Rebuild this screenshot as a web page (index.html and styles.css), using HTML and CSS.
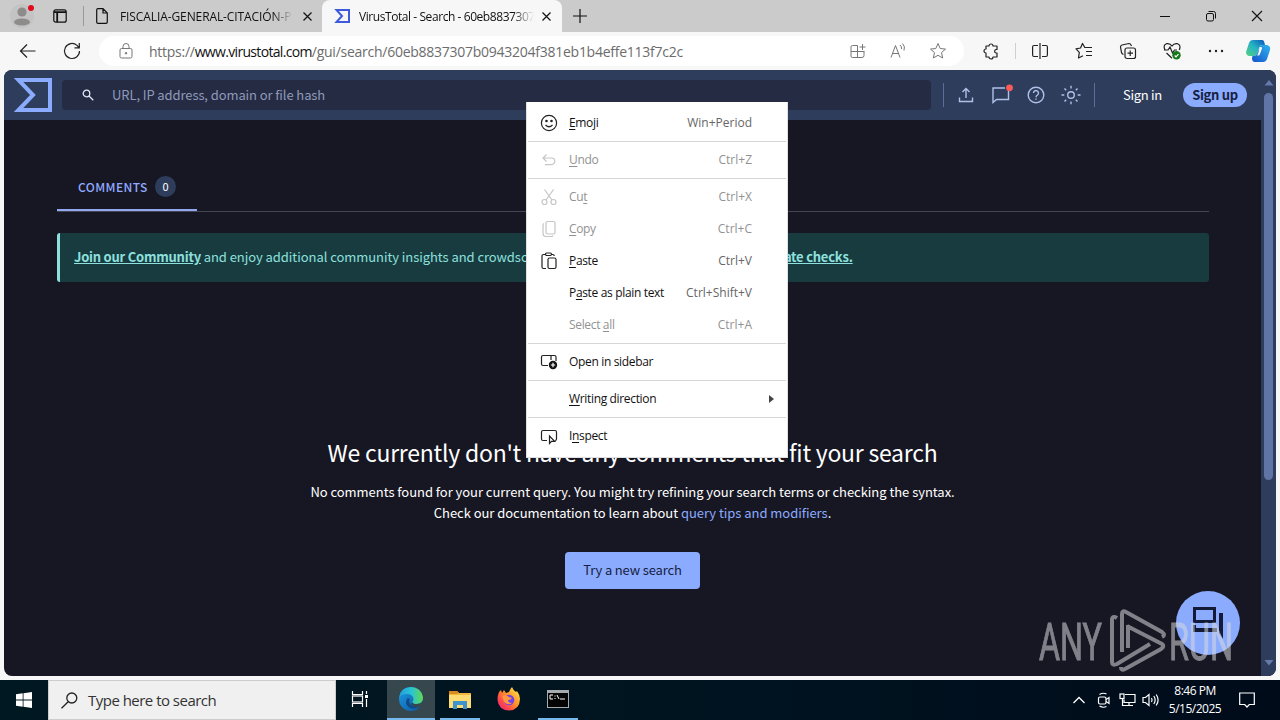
FILE: index.html
```
<!DOCTYPE html>
<html lang="en">
<head>
    <meta charset="UTF-8">
    <meta name="viewport" content="width=device-width, initial-scale=1.0">
    <title>VirusTotal - Search</title>
    <link rel="stylesheet" href="styles.css">
</head>
<body>
    <!-- Tab strip -->
    <div class="tab-strip">
        <svg class="profile" width="26" height="26" viewBox="0 0 26 26">
            <circle cx="13" cy="13" r="12" fill="#c4c3c3"/>
            <circle cx="13" cy="9" r="4.6" fill="#8e8c8a"/>
            <ellipse cx="13" cy="19" rx="8" ry="3.6" fill="#8e8c8a"/>
            <circle cx="22" cy="5" r="3" fill="#e00b1c"/>
        </svg>
        <svg class="workspaces" width="14" height="14" viewBox="0 0 14 14" fill="none" stroke="#111" stroke-width="1.2">
            <rect x=".8" y=".8" width="12.4" height="12.4" rx="2"/>
            <path d="M1 3.2h12M4.2 3v10" stroke-width="1.8"/>
        </svg>
        <span class="strip-line"></span>
        <div class="tab">
            <svg width="12" height="16" viewBox="0 0 12 16" fill="none" stroke="#111" stroke-width="1.2">
                <path d="M.7 2Q.7.7 2 .7h5l4.3 4.3v9q0 1.3-1.3 1.3H2Q.7 15.3.7 14zM7 .7V5h4.3"/>
            </svg>
            <span class="tab-title first">FISCALIA-GENERAL-CITACIÓN-P</span>
            <svg width="9" height="9" viewBox="0 0 9 9" stroke="#111" stroke-width="1.2"><path d="M.5.5l8 8M8.5.5l-8 8"/></svg>
        </div>
        <div class="tab active">
            <svg width="16" height="14" viewBox="0 0 16 14" fill="none" stroke="#3d5bdc" stroke-width="2">
                <path d="M2.5 1H15v12H2.5L8 7z"/>
            </svg>
            <span class="tab-title second">VirusTotal - Search - 60eb8837307</span>
            <svg width="9" height="9" viewBox="0 0 9 9" stroke="#111" stroke-width="1.2"><path d="M.5.5l8 8M8.5.5l-8 8"/></svg>
        </div>
        <svg class="new-tab" width="14" height="14" viewBox="0 0 14 14" stroke="#111" stroke-width="1.2"><path d="M7 0v14M0 7h14"/></svg>
        <div class="window-buttons">
            <svg width="12" height="12" viewBox="0 0 12 12" stroke="#111"><path d="M1 6.5h10"/></svg>
            <svg width="12" height="12" viewBox="0 0 12 12" fill="none" stroke="#111">
                <rect x="1.5" y="3.5" width="7" height="7.5" rx="1.5"/><path d="M3.5 1.5h5q2 0 2 2v5"/>
            </svg>
            <svg width="12" height="12" viewBox="0 0 12 12" stroke="#111" stroke-width="1.1"><path d="M1 1l10 10M11 1L1 11"/></svg>
        </div>
    </div>

    <!-- Address bar -->
    <div class="toolbar">
        <svg class="back" width="18" height="16" viewBox="0 0 18 16" fill="none" stroke="#222" stroke-width="1.2"><path d="M8 1.5L1.5 8 8 14.5M1.5 8H16.5"/></svg>
        <svg class="reload" width="18" height="18" viewBox="0 0 18 18" fill="none" stroke="#222" stroke-width="1.2"><path d="M16.5 9a7.5 7.5 0 1 1-2.5-5.6L16 5.5M16.3 1v4.8h-4.8"/></svg>
        <div class="address">
            <svg class="lock" width="14" height="16" viewBox="0 0 14 16" fill="none" stroke="#777">
                <rect x="1" y="5.5" width="12" height="9.5" rx="1.5"/><path d="M4 5.5V3.5a3 3 0 0 1 6 0v2"/><circle cx="7" cy="10.2" r=".8" fill="#777"/>
            </svg>
            <span class="url">https://<b>www.virustotal.com</b>/gui/search/60eb8837307b0943204f381eb1b4effe113f7c2c</span>
            <div class="address-icons">
                <svg width="18" height="18" viewBox="0 0 18 18" fill="none" stroke="#777">
                    <path d="M8.5 3.5h-5q-1.5 0-1.5 1.5v9q0 1.5 1.5 1.5h9.5q2 0 2-2V9.5M2 9.5h13.5M8.5 3.5v12M13.5 2v6M10.5 5h6"/>
                </svg>
                <svg width="18" height="18" viewBox="0 0 18 18" fill="none" stroke="#777">
                    <path d="M2 15.5L6.5 3.5l4.5 12M3.5 11.5h6M11 3q2 1.5 1.5 4M13.5 1.5q3 3 1.5 7"/>
                </svg>
                <svg width="18" height="18" viewBox="0 0 18 18" fill="none" stroke="#777" stroke-linejoin="round">
                    <path d="M9 1.5l2.2 5 5.3.6-4 3.5 1.2 5.4L9 13.3 4.3 16l1.2-5.4-4-3.5 5.3-.6z"/>
                </svg>
            </div>
        </div>
        <svg class="puzzle" width="16" height="16" viewBox="0 0 16 16" fill="none" stroke="#222" stroke-width="1.2" stroke-linejoin="round">
            <path d="M3 3h3a2 2 0 0 1 4 0h4v3.5h-1a1.8 1.8 0 0 0 0 3.5h1v4h-4a2 2 0 0 1-4 0H3v-4a2 2 0 0 1 0-4z"/>
        </svg>
        <span class="toolbar-line"></span>
        <div class="toolbar-icons">
            <svg width="18" height="18" viewBox="0 0 18 18" fill="none" stroke="#222" stroke-width="1.2">
                <path d="M7 3.5H3Q1.6 3.5 1.6 5v8q0 1.5 1.4 1.5h4M11 3.5h4q1.4 0 1.4 1.5v8q0 1.5-1.4 1.5h-4M9 1v16"/>
            </svg>
            <svg width="18" height="18" viewBox="0 0 18 18" fill="none" stroke="#222" stroke-width="1.2" stroke-linejoin="round">
                <path d="M11.5 5.5H9.8L7.5 1.5 5.5 6l-4.5.8 3.3 3.5L3.5 16l4.5-2.3M11 5.5h6M11 9.5h6M11 13.5h6"/>
            </svg>
            <svg width="18" height="18" viewBox="0 0 18 18" fill="none" stroke="#222" stroke-width="1.2">
                <rect x="6" y="6" width="10.5" height="10.5" rx="2"/><path d="M11.2 8.5v5.5M8.5 11.2h5.5M4.5 12.5Q3 12 2.5 10.5L1.5 5Q1.5 3.5 3 3l7-1.5q1.5 0 2 1.5l.5 1"/>
            </svg>
            <svg width="18" height="18" viewBox="0 0 18 18" fill="none" stroke="#222" stroke-width="1.2">
                <path d="M2 8Q-.3 3 3.5 1.7 7 1 9 4q2-3 5.5-2.3Q18.3 3 16.3 8M3.5 11L9 16.3M1 8h4l2-3 2.5 6L11.5 8H14"/>
                <circle cx="13.5" cy="13.3" r="4.2" fill="#16791b" stroke="none"/><path d="M11.7 13.5l1.3 1.3 2.5-2.7" stroke="#fff"/>
            </svg>
            <svg width="18" height="18" viewBox="0 0 18 18" fill="#222"><circle cx="3" cy="9" r="1.2"/><circle cx="9" cy="9" r="1.2"/><circle cx="15" cy="9" r="1.2"/></svg>
        </div>
        <svg class="copilot" width="24" height="24" viewBox="0 0 24 24">
            <defs>
                <linearGradient id="copilotLeft" x1="0" y1="1" x2="1" y2="0"><stop offset="0" stop-color="#55cf7e"/><stop offset=".5" stop-color="#25b5c4"/><stop offset="1" stop-color="#0b55ba"/></linearGradient>
                <linearGradient id="copilotRight" x1="0" y1="1" x2="1" y2="0"><stop offset="0" stop-color="#1452cb"/><stop offset="1" stop-color="#31b4ef"/></linearGradient>
            </defs>
            <path fill="url(#copilotLeft)" d="M7 1h9q2 0 2.5 3l.5 2h-3q-2 0-3 3l-2 6q-1 2-3 2H3q-3-1-3-4L3 4q1-3 4-3z"/>
            <path fill="url(#copilotRight)" d="M17 23H9q-3 0-3-4l.5-2H8q2 0 3-2l2-6q1-3 3-3h5q4 1 3 5l-3 9q-1 3-4 3z"/>
            <path fill="#f7f7f7" d="M13.5 8h1.5q1.5 0 1 1.5L14 15q-.5 1.5-2 1.5h-1q1-1 1.5-3z"/>
        </svg>
    </div>

    <!-- VirusTotal page -->
    <div class="page">
        <div class="page-main">
            <header class="vt-header">
                <svg class="logo" width="38" height="34" viewBox="0 0 38 34" fill="none" stroke="#8babff" stroke-width="4"><path d="M4.5 2H36v30H4.5L19 17z"/></svg>
                <div class="search-box">
                    <svg width="12" height="12" viewBox="0 0 12 12" fill="none" stroke="#dfe5f5" stroke-width="1.3"><circle cx="4.5" cy="4.5" r="3.3"/><path d="M7 7l4.3 4.3"/></svg>
                    <span>URL, IP address, domain or file hash</span>
                </div>
                <span class="header-line"></span>
                <div class="header-icons">
                    <svg width="20" height="20" viewBox="0 0 20 20" fill="none" stroke="#b0c1e8" stroke-width="1.4"><path d="M10 13V3.5M6.5 7L10 3.5 13.5 7M3.5 12.5v4h13v-4"/></svg>
                    <svg width="20" height="20" viewBox="0 0 20 20" fill="none" stroke="#b0c1e8" stroke-width="1.4"><path d="M14 3H2v14.5L5.5 14.5H17.5V6"/><circle cx="18.5" cy="2.8" r="3.4" fill="#fa5c57" stroke="none"/></svg>
                    <svg width="20" height="20" viewBox="0 0 20 20" fill="none" stroke="#b0c1e8" stroke-width="1.4"><circle cx="10" cy="10" r="7.8"/><path d="M7.5 8a2.5 2.5 0 1 1 4 2q-1.5 1-1.5 2.2M10 13.5v1.3"/></svg>
                    <svg width="20" height="20" viewBox="0 0 20 20" fill="none" stroke="#b0c1e8" stroke-width="1.4"><circle cx="10" cy="10" r="3.3"/><path d="M10 .8v2.7M10 16.5v2.7M.5 10h2.8M16.7 10h2.8M3.5 3.5l1.7 1.7M14.8 14.8l1.7 1.7M3.5 16.5l1.7-1.7M14.8 5.2l1.7-1.7"/></svg>
                </div>
                <span class="header-line second"></span>
                <span class="sign-in">Sign in</span>
                <span class="sign-up">Sign up</span>
            </header>
            <main>
                <div class="tabs">
                    <div class="vt-tab"><span class="vt-tab-name">COMMENTS</span><span class="count">0</span></div>
                </div>
                <div class="banner"><a>Join our Community</a> and enjoy additional community insights and crowdsourced detections, plus an API key to <a>automate checks.</a></div>
                <div class="empty">
                    <h1>We currently don't have any comments that fit your search</h1>
                    <p>No comments found for your current query. You might try refining your search terms or checking the syntax.</p>
                    <p>Check our documentation to learn about <a>query tips and modifiers</a>.</p>
                    <button>Try a new search</button>
                </div>
            </main>
        </div>
        <div class="scrollbar">
            <svg width="10" height="6" viewBox="0 0 10 6"><path d="M5 0l4.5 5.5h-9z" fill="#6579aa"/></svg>
            <span class="thumb"></span>
            <svg class="down" width="10" height="6" viewBox="0 0 10 6"><path d="M5 5.5L9.5 0h-9z" fill="#6579aa"/></svg>
        </div>
    </div>

    <!-- Windows taskbar -->
    <div class="taskbar">
        <div class="start">
            <svg width="16" height="16" viewBox="0 0 16 16" fill="#fff"><path d="M0 2.2L6.7 1.3V7.6H0zM7.5 1.2L16 0V7.6H7.5zM0 8.4H6.7V14.7L0 13.8zM7.5 8.4H16V16L7.5 14.8z"/></svg>
        </div>
        <div class="taskbar-search">
            <svg width="17" height="17" viewBox="0 0 17 17" fill="none" stroke="#222" stroke-width="1.3"><circle cx="10.8" cy="6" r="5"/><path d="M7.2 9.7L.5 16.3"/></svg>
            <span>Type here to search</span>
        </div>
        <div class="task-item task-view">
            <svg width="18" height="18" viewBox="0 0 18 18" fill="none" stroke="#fff" stroke-width="1.2"><path d="M1.5 1v3.5h10V1M1.5 17v-3.5h10V17M15.5 1v3M15.5 9v8"/><rect x="1.5" y="6" width="10" height="6"/><path d="M14 6.5h3" stroke-width="3"/></svg>
        </div>
        <div class="task-item edge running">
            <svg width="24" height="24" viewBox="0 0 24 24">
                <defs>
                    <linearGradient id="edgeTop"><stop offset="0" stop-color="#249ddd"/><stop offset=".5" stop-color="#29c3d5"/><stop offset="1" stop-color="#63d84e"/></linearGradient>
                    <linearGradient id="edgeBase" x1="0" y1="0" x2="1" y2="1"><stop offset="0" stop-color="#1b9de2"/><stop offset="1" stop-color="#0b55a2"/></linearGradient>
                </defs>
                <circle cx="12" cy="12" r="12" fill="url(#edgeBase)"/>
                <path d="M.3 10Q2 0 12 0q10 .5 12 10 .3 6.5-6.5 7-4 0-4.2-2 2-1.5 1-4Q13 7 8 7 3 7 .3 10z" fill="url(#edgeTop)"/>
                <path d="M8.5 11Q5 16 9.5 20q5 4 12-1.2-6 1.7-9.3-1Q9 15 11 12z" fill="#114a87"/>
                <path d="M13.3 15q0 2 4.2 2 4.5 0 6-2.5l1 3-2.5 2.5q-5 1-8-1-3-2-.7-4z" fill="#36484e"/>
            </svg>
        </div>
        <div class="task-item explorer running">
            <svg width="22" height="19" viewBox="0 0 22 19"><path d="M0 1h8l2 2h12v15H0z" fill="#f2b83d"/><path d="M0 1h8l2 2-2 1H0z" fill="#d98a1e"/><path d="M0 5h22v13H0z" fill="#ffdc73"/><path d="M4 11h14v8h-4v-4H8v4H4z" fill="#3e93cc"/></svg>
        </div>
        <div class="task-item firefox">
            <svg width="24" height="24" viewBox="0 0 24 24">
                <defs><linearGradient id="fox" x1="1" y1="0" x2="0" y2="1"><stop offset="0" stop-color="#fff44f"/><stop offset=".45" stop-color="#ff9228"/><stop offset=".75" stop-color="#ff4052"/><stop offset="1" stop-color="#e5208c"/></linearGradient></defs>
                <path d="M2 5l2-2 1 3 2-3 2 3 3-1Q13 2 15 0q1 3 4 5l1-1q3 4 3 8-.3 11-11 11.5Q1.5 23 .5 13 .5 8 2 5z" fill="url(#fox)"/>
                <circle cx="12" cy="13" r="5.3" fill="#7543e5"/><path d="M5 9q4-2 7 1l3 1q-1 2-4 2 0 3 4 3-4 3-8-1z" fill="#ff9640"/>
            </svg>
        </div>
        <div class="task-item cmd running">
            <svg width="22" height="18" viewBox="0 0 22 18"><rect width="22" height="18" fill="#a6acae"/><rect x="1" y="3" width="20" height="14" fill="#050505"/><path d="M6 5H3v4h3M8 5.5v1M8 8v1M10 5l2 4M13 9h5" stroke="#fff" fill="none"/></svg>
        </div>
        <div class="tray">
            <svg class="chevron" width="12" height="8" viewBox="0 0 12 8" fill="none" stroke="#fff" stroke-width="1.3"><path d="M.5 7L6 1.5 11.5 7"/></svg>
            <svg class="meet" width="14" height="16" viewBox="0 0 14 16" fill="none" stroke="#fff" stroke-width="1.2"><rect x="1.5" y="5" width="7.5" height="7" rx="1.5"/><path d="M9 7.5L12 5.5v6L9 9.5M2.5 2.5Q6 .3 9.5 2M2.5 14Q6 16.2 9.5 14.5"/></svg>
            <svg class="network" width="17" height="16" viewBox="0 0 17 16" fill="none" stroke="#fff" stroke-width="1.2"><path d="M6 2.5h10v8H5v-3M10 10.5v3M6 13.5h8M3.5 7v6.5H6"/><rect x="1" y="2" width="4" height="4.5"/></svg>
            <svg class="sound" width="18" height="16" viewBox="0 0 18 16" fill="none" stroke="#fff" stroke-width="1.2"><path d="M1 5.5h2.5L7 2.5v11l-3.5-3H1zM9.5 6q1.2 2 0 4M11.8 4q2.7 4 0 8M14.2 2.5q3.8 5.5 0 11"/></svg>
            <div class="clock"><span>8:46 PM</span><span>5/15/2025</span></div>
            <svg class="notify" width="16" height="16" viewBox="0 0 16 16" fill="none" stroke="#fff" stroke-width="1.2"><path d="M.7 1h14.6v11.5h-5L8 15l-2.3-2.5h-5z"/></svg>
        </div>
    </div>

    <!-- Feedback button and recording watermark -->
    <div class="chat">
        <svg width="32" height="32" viewBox="0 0 32 32" fill="#141b38"><path d="M1 0h23v16H1zM4 3v10h17V3z" fill-rule="evenodd"/><path d="M1 18h3v3h21v4H1zM27 6h4v26l-4-6z"/></svg>
    </div>
    <svg class="watermark" width="196" height="66" viewBox="0 0 196 66">
        <g fill="#d9dadd" stroke="#d9dadd" stroke-width="1">
            <text x="2" y="51.5" textLength="63" lengthAdjust="spacingAndGlyphs">ANY</text>
            <text x="132" y="51.5" textLength="64" lengthAdjust="spacingAndGlyphs">RUN</text>
        </g>
        <path d="M80 10q-5-3-5 2v42q0 4 5 2l33-20M85 44V6q0-4 4-2l36 20q4 3 0 5M90 18l35 18q3 2-1 5L88 61q-4 2-4-2M91 17v23" fill="none" stroke="#d9dadd" stroke-width="4"/>
    </svg>

    <!-- Context menu -->
    <div class="menu">
        <div class="menu-item">
            <svg width="18" height="18" viewBox="0 0 18 18" fill="none" stroke="#222" stroke-width="1.2"><circle cx="9" cy="9" r="7.6"/><path d="M5.5 11q3.5 3.5 7 0"/><circle cx="6.5" cy="7" r=".7" fill="#222"/><circle cx="11.5" cy="7" r=".7" fill="#222"/></svg>
            <span class="label"><u>E</u>moji</span><kbd>Win+Period</kbd>
        </div>
        <hr>
        <div class="menu-item disabled">
            <svg width="18" height="18" viewBox="0 0 18 18" fill="none" stroke="#c5c5c5" stroke-width="1.2"><path d="M6.5 3.5L3 7l3.5 3.5M3 7h8.5a3.3 3.3 0 0 1 0 6.6H5"/></svg>
            <span class="label"><u>U</u>ndo</span><kbd>Ctrl+Z</kbd>
        </div>
        <hr>
        <div class="menu-item disabled">
            <svg width="18" height="18" viewBox="0 0 18 18" fill="none" stroke="#c5c5c5" stroke-width="1.2"><circle cx="4.5" cy="14" r="2.5"/><circle cx="13.5" cy="14" r="2.5"/><path d="M4.5 1.5l7.5 10.5M13.5 1.5L6 12"/></svg>
            <span class="label">Cu<u>t</u></span><kbd>Ctrl+X</kbd>
        </div>
        <div class="menu-item disabled">
            <svg width="18" height="18" viewBox="0 0 18 18" fill="none" stroke="#c5c5c5" stroke-width="1.2"><rect x="6" y="1.5" width="9" height="12.5" rx="1.5"/><path d="M4 3.5q-1 .5-1 2v8q0 3 3 3h5.5q1.5 0 1.5-1"/></svg>
            <span class="label"><u>C</u>opy</span><kbd>Ctrl+C</kbd>
        </div>
        <div class="menu-item">
            <svg width="18" height="18" viewBox="0 0 18 18" fill="none" stroke="#222" stroke-width="1.2"><path d="M5.5 2.5h-2Q2 2.5 2 4v11q0 1.5 1.5 1.5H6M11.5 2.5h1.2q1.5 0 1.5 1.5"/><rect x="5.5" y="1" width="6" height="2.5" rx="1.2"/><rect x="8" y="6" width="8" height="10.5" rx="1.5"/></svg>
            <span class="label"><u>P</u>aste</span><kbd>Ctrl+V</kbd>
        </div>
        <div class="menu-item no-icon"><span class="label">P<u>a</u>ste as plain text</span><kbd>Ctrl+Shift+V</kbd></div>
        <div class="menu-item no-icon disabled"><span class="label">Select <u>a</u>ll</span><kbd>Ctrl+A</kbd></div>
        <hr>
        <div class="menu-item">
            <svg width="18" height="18" viewBox="0 0 18 18" fill="none" stroke="#222" stroke-width="1.2"><path d="M8 12.5H3Q1.5 12.5 1.5 11V4Q1.5 2.5 3 2.5h11.5q1.5 0 1.5 1.5v4M11 2.5V7"/><circle cx="13" cy="12" r="4.2" fill="#111" stroke="none"/><path d="M13 9.8v4.4M10.8 12h4.4" stroke="#fff"/></svg>
            <span class="label">Open in sidebar</span>
        </div>
        <hr>
        <div class="menu-item no-icon"><span class="label"><u>W</u>riting direction</span><svg class="arrow" width="5" height="8" viewBox="0 0 5 8"><path d="M0 0l5 4-5 4z" fill="#444"/></svg></div>
        <hr>
        <div class="menu-item">
            <svg width="18" height="18" viewBox="0 0 18 18" fill="none" stroke="#222" stroke-width="1.2"><path d="M7 13.5H3Q1.5 13.5 1.5 12V5Q1.5 3.5 3 3.5h12q1.5 0 1.5 1.5v7q0 1.5-1.5 1.5"/><path d="M9.5 9v7.5l2-2.2h3.2z"/></svg>
            <span class="label">I<u>n</u>spect</span>
        </div>
    </div>
</body>
</html>
```
FILE: styles.css
```
* {
    box-sizing: border-box;
}

body {
    margin: 0;
    width: 1280px;
    height: 720px;
    overflow: hidden;
    display: flex;
    flex-direction: column;
    position: relative;
    background-color: #f7f7f7;
    font-family: "Open Sans", "Noto Sans", sans-serif;
    font-size: 12px;
    color: #111;
    white-space: nowrap;
}

svg {
    display: block;
    flex-shrink: 0;
    overflow: visible;
}

/* Tab strip */
.tab-strip {
    height: 32px;
    display: flex;
    align-items: center;
    background-color: #cbcbcb;
    padding-left: 9px;
}

.workspaces {
    margin-left: 18px;
}

.strip-line {
    width: 1px;
    height: 20px;
    margin-left: 16px;
    background-color: #999;
}

.tab {
    width: 238px;
    height: 32px;
    display: flex;
    align-items: center;
    padding-left: 12px;
}

.tab.active {
    width: 240px;
    background-color: #f7f7f7;
    border-radius: 8px 8px 0 0;
}

.tab-title {
    width: 173px;
    margin-left: 12px;
    margin-right: 10px;
    overflow: hidden;
    mask-image: linear-gradient(90deg, #000 88%, transparent);
}

.tab-title.first {
    letter-spacing: -0.1px;
}

.tab-title.second {
    width: 175px;
    margin-left: 9px;
    margin-right: 8px;
    letter-spacing: -0.43px;
}

.new-tab {
    margin-left: 11px;
}

.window-buttons {
    display: flex;
    gap: 34px;
    margin-left: auto;
    margin-right: 17px;
}

/* Toolbar */
.toolbar {
    height: 38px;
    display: flex;
    align-items: center;
    padding-left: 19px;
}

.reload {
    margin-left: 26px;
}

.address {
    width: 865px;
    height: 30px;
    margin-left: 18px;
    padding-left: 20px;
    display: flex;
    align-items: center;
    border-radius: 15px;
    background-color: #fff;
}

.url {
    margin-left: 16px;
    font-size: 14px;
    letter-spacing: -0.26px;
    color: #6c6c6c;
}

.url b {
    font-weight: 400;
    letter-spacing: -0.67px;
    color: #111;
}

.address-icons {
    display: flex;
    gap: 22px;
    margin-left: auto;
    margin-right: 17px;
}

.puzzle {
    margin-left: 19px;
}

.toolbar-line {
    width: 1px;
    height: 16px;
    margin-left: 16px;
    background-color: #cfcfcf;
}

.toolbar-icons {
    display: flex;
    gap: 26px;
    margin-left: 15px;
}

.copilot {
    margin-left: 21px;
}

/* Page */
.page {
    width: 1272px;
    height: 606px;
    margin-left: 4px;
    display: flex;
    overflow: hidden;
    border-radius: 8px;
    background-color: #171723;
    font-family: "Noto Sans CJK SC", sans-serif;
    font-size: 13px;
}

.page-main {
    width: 1257px;
}

.vt-header {
    height: 50px;
    display: flex;
    align-items: center;
    padding-left: 10px;
    background-color: #2f3d5c;
}

.search-box {
    width: 869px;
    height: 30px;
    margin-left: 10px;
    padding-left: 20px;
    display: flex;
    align-items: center;
    gap: 18px;
    border-radius: 4px;
    background-color: #252b42;
    color: #8e9abb;
}

.search-box span {
    padding-bottom: 2px;
    letter-spacing: -0.1px;
}

.header-line {
    width: 1px;
    height: 24px;
    margin-left: 12px;
    background-color: #5a6d9b;
}

.header-line.second {
    margin-left: 13px;
}

.header-icons {
    display: flex;
    gap: 15px;
    margin-left: 12px;
}

.sign-in {
    width: 40px;
    margin-left: 28px;
    padding-bottom: 2px;
    letter-spacing: -0.3px;
    color: #fff;
}

.sign-up {
    width: 64px;
    height: 24px;
    margin-left: 20px;
    line-height: 24px;
    text-align: center;
    border-radius: 12px;
    background-color: #8babff;
    color: #16213f;
    font-weight: 700;
    letter-spacing: -0.3px;
}

main {
    padding: 42px 52px 0 53px;
}

.tabs {
    height: 50px;
    border-bottom: 1px solid #454653;
}

.vt-tab {
    width: 140px;
    height: 49px;
    display: flex;
    align-items: center;
    padding-top: 1px;
    padding-left: 21px;
    border-bottom: 2px solid #91a9ec;
    color: #91a9ff;
    font-size: 12px;
}

.vt-tab-name {
    width: 77px;
    font-weight: 500;
    letter-spacing: 0.4px;
}

.count {
    width: 21px;
    height: 21px;
    border-radius: 50%;
    background-color: #2f3d5c;
    color: #fff;
    font-size: 11px;
    line-height: 21px;
    text-align: center;
}

.banner {
    height: 49px;
    margin-top: 21px;
    padding-left: 14px;
    line-height: 48px;
    letter-spacing: -0.06px;
    border-left: 3px solid #8de0de;
    border-radius: 3px;
    background-color: #173b3f;
    color: #8de0de;
}

.banner a {
    font-weight: 700;
    letter-spacing: -0.23px;
    text-decoration: underline;
}

.empty {
    display: flex;
    flex-direction: column;
    align-items: center;
    padding-top: 151px;
    padding-right: 1px;
    color: #fff;
}

.empty h1 {
    margin: 0 0 9px;
    font-size: 23px;
    font-weight: 400;
    line-height: 39px;
    letter-spacing: -0.24px;
}

.empty p {
    margin: 0;
    line-height: 21px;
    letter-spacing: -0.04px;
}

.empty p a {
    color: #8babff;
}

.empty button {
    width: 135px;
    height: 37px;
    margin-top: 29px;
    padding: 0 0 2px;
    border: none;
    border-radius: 4px;
    background-color: #8babff;
    color: #16213f;
    font-family: inherit;
    font-size: 13px;
    letter-spacing: -0.15px;
}

.scrollbar {
    width: 15px;
    display: flex;
    flex-direction: column;
    align-items: center;
    padding: 10px 0;
    background-color: #2f3d5c;
}

.thumb {
    width: 9px;
    height: 387px;
    margin-top: 7px;
    border-radius: 5px;
    background-color: #6075a5;
}

.down {
    margin-top: auto;
}

/* Taskbar */
.taskbar {
    height: 40px;
    margin-top: 4px;
    display: flex;
    background: linear-gradient(90deg, #001821, #001320 60%, #000b1a);
}

.start {
    width: 48px;
    display: flex;
    align-items: center;
    justify-content: center;
}

.taskbar-search {
    width: 288px;
    display: flex;
    align-items: center;
    gap: 10px;
    padding-left: 12px;
    border: 1px solid #ccc;
    background-color: #f0f0f0;
    color: #333;
    font-size: 15px;
}

.taskbar-search span {
    letter-spacing: -0.52px;
}

.task-item {
    height: 40px;
    display: flex;
    align-items: center;
    justify-content: center;
    border-bottom: 2px solid transparent;
}

.running {
    border-bottom-color: #76b9ed;
}

.task-view {
    width: 48px;
}

.edge {
    width: 48px;
    margin-left: 3px;
    background-color: #36484e;
}

.explorer {
    width: 40px;
    margin-left: 5px;
}

.firefox {
    width: 48px;
    margin-left: 5px;
}

.cmd {
    width: 40px;
    margin-left: 5px;
}

.tray {
    width: 207px;
    margin-left: auto;
    display: flex;
    align-items: center;
}

.meet {
    margin-left: 12px;
}

.network {
    margin-left: 8px;
}

.sound {
    margin-left: 6px;
}

.clock {
    width: 54px;
    margin-left: 8px;
    display: flex;
    flex-direction: column;
    align-items: center;
    color: #fff;
    line-height: 18px;
    letter-spacing: -0.5px;
}

.notify {
    margin-left: 17px;
}

/* Overlays */
.chat {
    position: absolute;
    left: 1176px;
    top: 591px;
    width: 64px;
    height: 64px;
    display: flex;
    align-items: center;
    justify-content: center;
    border-radius: 50%;
    background-color: #8babff;
}

.watermark {
    position: absolute;
    left: 1037px;
    top: 608px;
    opacity: 0.55;
    font-family: Roboto, sans-serif;
    font-size: 52px;
}

.menu {
    position: absolute;
    left: 526px;
    top: 102px;
    width: 262px;
    height: 356px;
    padding: 5px 1px 0;
    border: 1px solid #e0e0e0;
    border-width: 0 1px 1px;
    background-color: #fff;
}

.menu hr {
    height: 1px;
    margin: 2px 0;
    border: none;
    background-color: #d6d6d6;
}

.menu-item {
    height: 32px;
    display: flex;
    align-items: center;
    padding-left: 12px;
    padding-right: 34px;
}

.menu-item.no-icon {
    padding-left: 41px;
}

.label {
    padding-bottom: 1px;
    letter-spacing: -0.34px;
}

.menu-item svg + .label {
    margin-left: 11px;
}

.menu-item kbd {
    margin-left: auto;
    padding-bottom: 1px;
    font-family: inherit;
    color: #666;
}

.disabled,
.menu-item.disabled kbd {
    color: #929292;
}

.menu-item u {
    text-underline-offset: 2px;
}

.arrow {
    margin-left: auto;
    margin-right: -22px;
}
```
